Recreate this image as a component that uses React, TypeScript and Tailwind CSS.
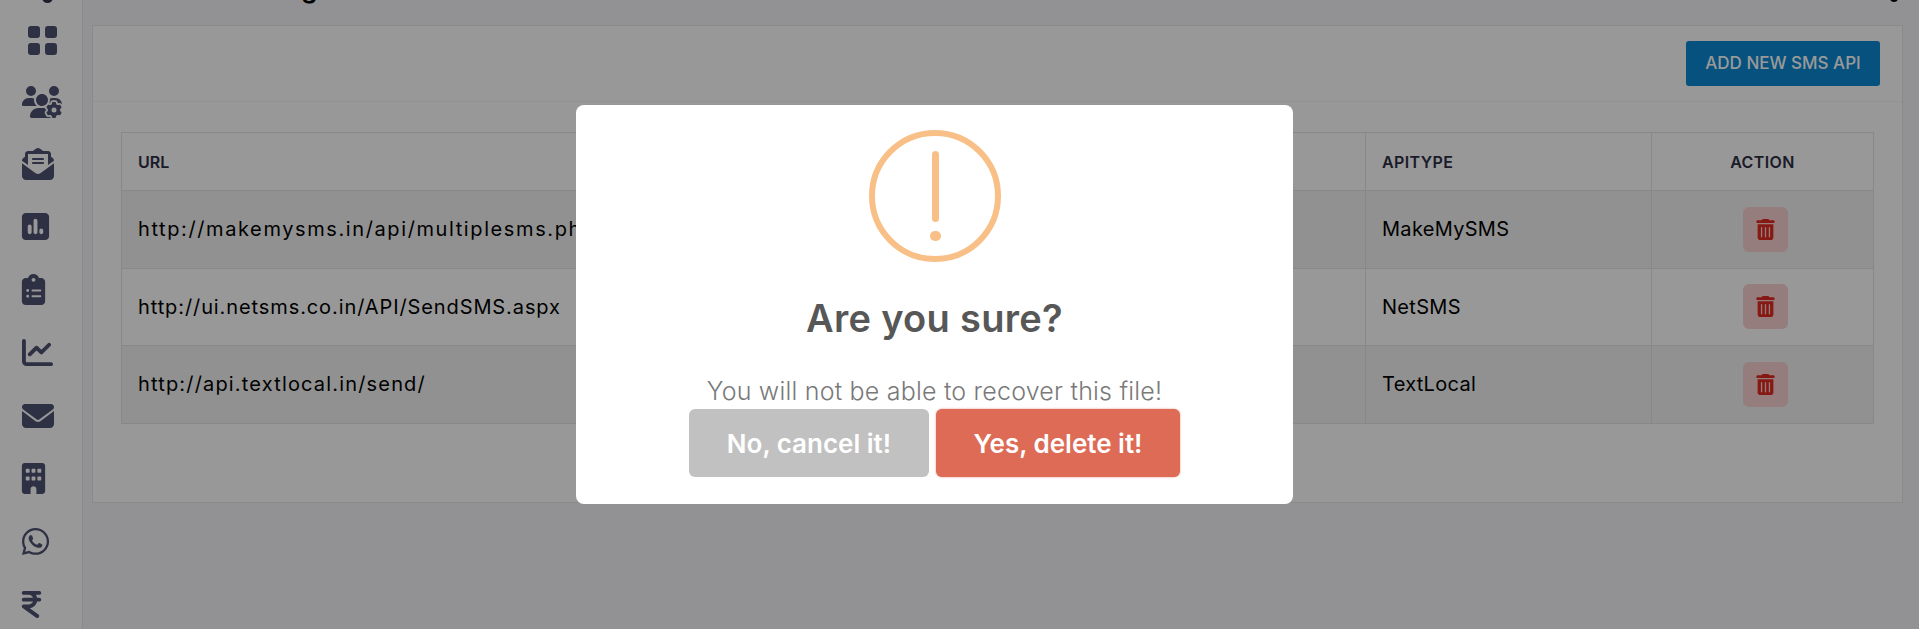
import {
  FaUsersGear,
  FaEnvelopeOpenText,
  FaSquarePollVertical,
  FaClipboardList,
  FaChartLine,
  FaEnvelope,
  FaBuilding,
  FaWhatsapp,
  FaIndianRupeeSign,
  FaTrashCan,
} from 'react-icons/fa6';

const font = "font-['Inter','Liberation_Sans',sans-serif]";

const rows = [
  { url: 'http://makemysms.in/api/multiplesms.php', type: 'MakeMySMS', bg: 'bg-[#f2f2f2]', track: 'tracking-[1.6px]' },
  { url: 'http://ui.netsms.co.in/API/SendSMS.aspx', type: 'NetSMS', bg: 'bg-[#fdfdfd]', track: 'tracking-[0.9px]' },
  { url: 'http://api.textlocal.in/send/', type: 'TextLocal', bg: 'bg-[#f2f2f2]', track: 'tracking-[1.17px]' },
];

const Sidebar = () => (
  <div className="w-[83px] h-[629px] shrink-0 overflow-hidden border-r border-[#e6e6ea] bg-[#fdfdfd] pl-[22px] text-[#4e5072]">
    <div className="ml-[20px] -mt-[8px] h-[11px] w-[11px] rounded-full bg-[#33354a]" />
    <div className="flex h-[63px] items-center pl-[6px] mt-[6px]">
      <svg width="29" height="29" viewBox="0 0 29 29" fill="currentColor">
        <rect x="0" y="0" width="12" height="12" rx="3" />
        <rect x="17" y="0" width="12" height="12" rx="3" />
        <rect x="0" y="17" width="12" height="12" rx="3" />
        <rect x="17" y="17" width="12" height="12" rx="3" />
      </svg>
    </div>
    <div className="flex h-[60px] items-center">
      <FaUsersGear className="text-[40px]" />
    </div>
    <div className="flex h-[63px] items-center">
      <FaEnvelopeOpenText className="text-[32px]" />
    </div>
    <div className="flex h-[63px] items-center">
      <FaSquarePollVertical className="-ml-[2px] text-[31px]" />
    </div>
    <div className="flex h-[63px] items-center">
      <FaClipboardList className="-ml-[4px] text-[31px]" />
    </div>
    <div className="flex h-[63px] items-center">
      <FaChartLine className="text-[31px]" />
    </div>
    <div className="flex h-[63px] items-center">
      <FaEnvelope className="text-[32px]" />
    </div>
    <div className="flex h-[63px] items-center">
      <FaBuilding className="-ml-[4px] text-[31px]" />
    </div>
    <div className="flex h-[63px] items-center">
      <FaWhatsapp className="-ml-[2px] text-[31px]" />
    </div>
    <div className="flex h-[63px] items-center">
      <FaIndianRupeeSign className="-ml-[6px] text-[31px]" />
    </div>
  </div>
);

const ApiTable = () => (
  <table className="w-[1753px] table-fixed border-collapse text-[20px] text-black">
    <thead>
      <tr className="h-[58px] border-b border-b-[#a5a5a8] text-left text-[16px] font-semibold text-[#2d2f45]">
        <th className="w-[1244px] border border-[#e3e3e8] pl-[16px] font-semibold">URL</th>
        <th className="w-[286px] border border-[#e3e3e8] pl-[16px] font-semibold tracking-[0.4px]">APITYPE</th>
        <th className="border border-[#e3e3e8] text-center font-semibold tracking-[0.4px]">ACTION</th>
      </tr>
    </thead>
    <tbody>
      {rows.map((r) => (
        <tr key={r.type} className={`h-[77.5px] ${r.bg}`}>
          <td className={`border border-[#e3e3e8] pl-[16px] whitespace-nowrap overflow-hidden ${r.track}`}>{r.url}</td>
          <td className="border border-[#e3e3e8] pl-[16px] tracking-[0.3px]">{r.type}</td>
          <td className="border border-[#e3e3e8]">
            <button className="ml-[91px] flex h-[45px] w-[45px] items-center justify-center rounded-[6px] bg-[#f9d0d0] text-[#e02b20]">
              <FaTrashCan className="text-[21px]" />
            </button>
          </td>
        </tr>
      ))}
    </tbody>
  </table>
);

const WarningDialog = () => (
  <div className="fixed inset-0 flex items-center justify-center bg-black/40 pr-[50px] pb-[20px]">
    <div className="flex h-[399px] w-[717px] flex-col items-center rounded-[8px] bg-white pt-[25px]">
      <div className="relative h-[132px] w-[132px] rounded-full border-[6px] border-[#f8c086]">
        <div className="absolute left-[57px] top-[15px] h-[71px] w-[7px] rounded-full bg-[#f8c086]" />
        <div className="absolute left-[55px] top-[95px] h-[10px] w-[11px] rounded-full bg-[#f8c086]" />
      </div>
      <h2 className="mt-[29px] text-[38px] leading-[54px] font-semibold tracking-[0.3px] text-[#575757]">Are you sure?</h2>
      <p className="mt-[28px] text-[25px] leading-[36px] font-light tracking-[0.2px] text-[#797979]">
        You will not be able to recover this file!
      </p>
      <div className="flex gap-[7px]">
        <button className="h-[68px] w-[240px] rounded-[6px] bg-[#c1c1c1] text-[26px] font-semibold text-white">
          No, cancel it!
        </button>
        <button className="h-[68px] w-[244px] rounded-[6px] bg-[#dd6b55] text-[26px] font-semibold text-white shadow-[0_0_2px_rgba(221,107,85,0.8)]">
          Yes, delete it!
        </button>
      </div>
    </div>
  </div>
);

export default function App() {
  return (
    <div className={`flex h-[629px] w-full overflow-hidden bg-[#f3f3f8] ${font}`}>
      <Sidebar />
      <div className="flex-1 pl-[9px] pr-[16px]">
        <div className="flex h-[25px] justify-between">
          <h1 className="-mt-[29px] ml-[23px] text-[26px] leading-[36px] font-semibold text-black">SMS API Setting</h1>
          <div className="-mt-[6px] mr-[5px] h-[8px] w-[8px] rounded-full bg-black" />
        </div>
        <div className="h-[478px] border border-[#e6e6ea] bg-[#fdfdfd]">
          <div className="flex h-[76px] items-start justify-end border-b border-[#f3f3f3] pt-[15px] pr-[22px]">
            <button className="h-[45px] w-[194px] rounded-[3px] bg-[#0a88d3] text-[17px] font-medium text-white">
              ADD NEW SMS API
            </button>
          </div>
          <div className="px-[28px] pt-[30px]">
            <ApiTable />
          </div>
        </div>
      </div>
      <WarningDialog />
    </div>
  );
}
